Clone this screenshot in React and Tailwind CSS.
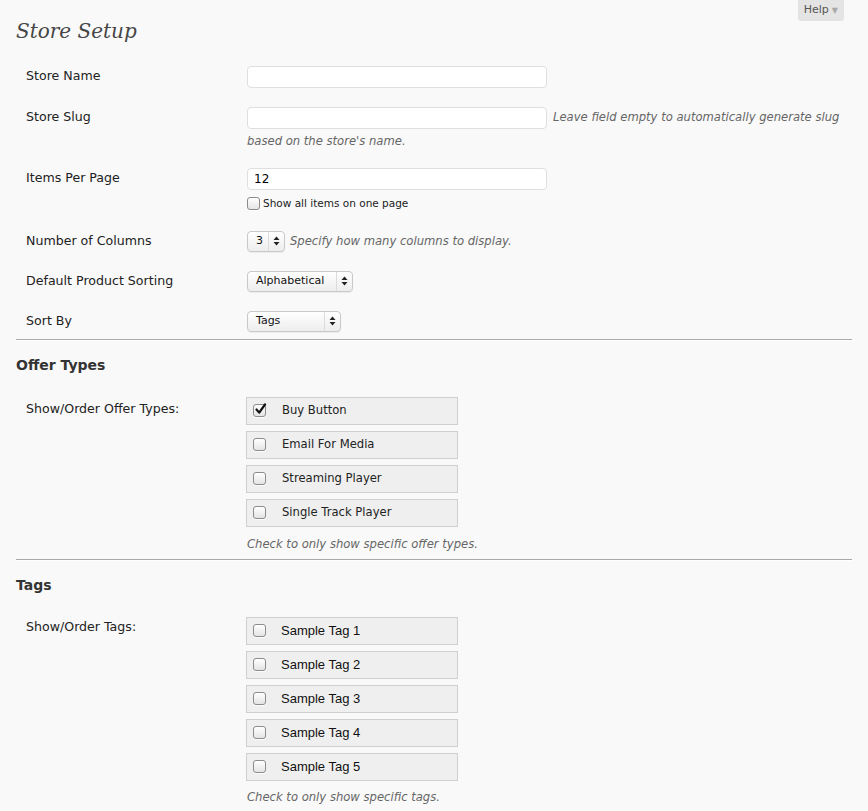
import React from "react";

const sans = "font-['DejaVu_Sans',sans-serif]";

function Check({ checked }) {
  return (
    <span className="relative inline-flex h-[13px] w-[13px] shrink-0 items-center justify-center rounded-[3px] border border-[#8c8c8c] bg-gradient-to-b from-white to-[#e4e4e4] shadow-[0_1px_0_rgba(255,255,255,0.8)]">
      {checked && (
        <svg width="13" height="13" viewBox="0 0 13 13" className="absolute left-[0px] top-[-2px]">
          <path d="M2.5 6.5 L5.2 9.6 L11 1.5" fill="none" stroke="#111" strokeWidth="2.2" strokeLinecap="round" strokeLinejoin="round" />
        </svg>
      )}
    </span>
  );
}

function Arrows() {
  return (
    <svg width="7" height="10" viewBox="0 0 7 10">
      <path d="M3.5 0.5 L6.5 4 L0.5 4 Z" fill="#222" />
      <path d="M3.5 9.5 L6.5 6 L0.5 6 Z" fill="#222" />
    </svg>
  );
}

function Select({ label, wClass }) {
  return (
    <div className={`flex h-[21px] items-stretch rounded-[4px] border border-[#c9c9c9] bg-gradient-to-b from-white to-[#ededed] shadow-[0_1px_1px_rgba(0,0,0,0.06)] ${wClass}`}>
      <span className={`flex flex-1 items-center pl-[8px] text-[11px] text-[#111] ${sans}`}>{label}</span>
      <span className="flex w-[16px] items-center justify-center border-l border-[#dcdcdc]">
        <Arrows />
      </span>
    </div>
  );
}

function TextInput({ value }) {
  return (
    <div className={`flex h-[22px] w-[300px] items-center rounded-[4px] border border-[#dfdfdf] bg-white pl-[6px] text-[12px] text-black ${sans}`}>
      {value}
    </div>
  );
}

function Row({ label, children, className = "", labelPt = "pt-[2px]" }) {
  return (
    <div className={`flex items-start ${className}`}>
      <div className={`w-[231px] shrink-0 pl-[10px] text-[12.6px] leading-[16px] text-[#222] ${labelPt} ${sans}`}>{label}</div>
      <div className="flex-1">{children}</div>
    </div>
  );
}

function Desc({ children, className = "" }) {
  return <span className={`text-[11.6px] italic text-[#666] ${sans} ${className}`}>{children}</span>;
}

function Hr({ className = "" }) {
  return <div className={`mr-[16px] h-[2px] border-t border-[#a8a8a8] border-b border-b-white ${className}`} />;
}

function OfferItem({ label, checked }) {
  return (
    <div className="flex h-[28px] w-[212px] items-center border border-[#cfcfcf] bg-[#efefef] pl-[6px]">
      <Check checked={checked} />
      <span className={`ml-[16px] text-[11.6px] text-[#222] ${sans}`}>{label}</span>
    </div>
  );
}

function TagItem({ label }) {
  return (
    <div className="flex h-[28px] w-[212px] items-center border border-[#cfcfcf] bg-[#efefef] pl-[6px]">
      <Check />
      <span className="ml-[15px] font-['Liberation_Sans',Arial,sans-serif] text-[13px] text-[#111]">{label}</span>
    </div>
  );
}

export default function App() {
  return (
    <div className="min-h-screen bg-[#f9f9f9] pl-[16px]">
      <div className="flex items-start justify-between">
        <h1 className="mt-[17px] font-['DejaVu_Serif',Georgia,serif] text-[20px] italic leading-[28px] text-[#464646]">
          Store Setup
        </h1>
        <div className={`mr-[24px] flex h-[21px] items-center gap-[3px] rounded-b-[3px] bg-[#e4e4e4] px-[6px] text-[11px] text-[#555] ${sans}`}>
          Help <span className="text-[8px] text-[#a8a8a8]">▼</span>
        </div>
      </div>

      <Row label="Store Name" className="mt-[21px]">
        <TextInput value="" />
      </Row>
      <Row label="Store Slug" className="mt-[19px]">
        <div className="flex items-center">
          <TextInput value="" />
          <Desc className="ml-[6px]">Leave field empty to automatically generate slug</Desc>
        </div>
        <div className="mt-[2px] leading-[16px]">
          <Desc>based on the store's name.</Desc>
        </div>
      </Row>
      <Row label="Items Per Page" className="mt-[19px]">
        <TextInput value="12" />
        <label className={`mt-[6px] flex items-center gap-[3px] text-[10.5px] text-[#222] ${sans}`}>
          <Check />
          Show all items on one page
        </label>
      </Row>
      <Row label="Number of Columns" className="mt-[19px]">
        <div className="flex items-center">
          <Select label="3" wClass="w-[38px]" />
          <Desc className="ml-[5px]">Specify how many columns to display.</Desc>
        </div>
      </Row>
      <Row label="Default Product Sorting" className="mt-[19px]">
        <Select label="Alphabetical" wClass="w-[106px]" />
      </Row>
      <Row label="Sort By" className="mt-[19px]">
        <Select label="Tags" wClass="w-[94px]" />
      </Row>

      <Hr className="mt-[7px]" />
      <h3 className={`mt-[15px] text-[14px] font-bold leading-[18px] text-[#333] ${sans}`}>Offer Types</h3>

      <Row label="Show/Order Offer Types:" className="mt-[23px]" labelPt="pt-[4px]">
        <div className="-ml-[1px] flex flex-col gap-[6px]">
          <OfferItem label="Buy Button" checked />
          <OfferItem label="Email For Media" />
          <OfferItem label="Streaming Player" />
          <OfferItem label="Single Track Player" />
        </div>
        <div className="mt-[7px] leading-[16px]">
          <Desc>Check to only show specific offer types.</Desc>
        </div>
      </Row>

      <Hr className="mt-[7px]" />
      <h3 className={`mt-[15px] text-[14px] font-bold leading-[18px] text-[#333] ${sans}`}>Tags</h3>

      <Row label="Show/Order Tags:" className="mt-[23px]">
        <div className="-ml-[1px] flex flex-col gap-[6px]">
          <TagItem label="Sample Tag 1" />
          <TagItem label="Sample Tag 2" />
          <TagItem label="Sample Tag 3" />
          <TagItem label="Sample Tag 4" />
          <TagItem label="Sample Tag 5" />
        </div>
        <div className="mt-[6px] leading-[16px]">
          <Desc>Check to only show specific tags.</Desc>
        </div>
      </Row>
    </div>
  );
}
